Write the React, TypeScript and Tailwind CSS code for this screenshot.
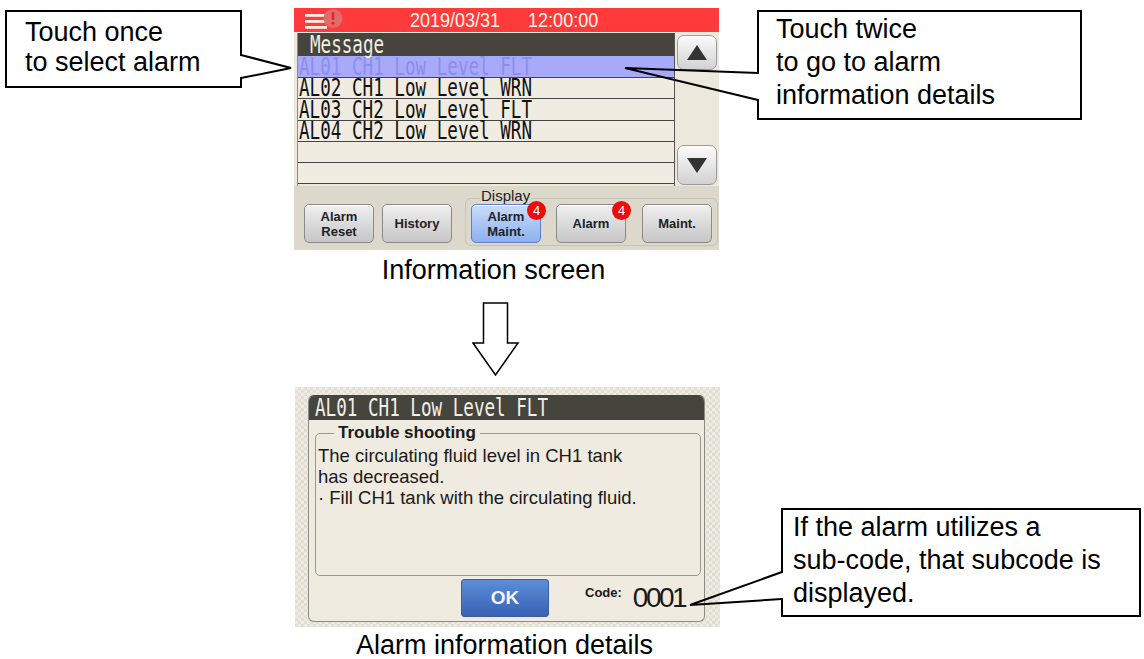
import clsx from "clsx";
import type { ReactNode } from "react";

const sans = "font-['Liberation_Sans',Arial,sans-serif]";

const alarms = [
    { text: "AL01 CH1 Low Level FLT", tall: true, selected: true },
    { text: "AL02 CH1 Low Level WRN", tall: false },
    { text: "AL03 CH2 Low Level FLT", tall: true },
    { text: "AL04 CH2 Low Level WRN", tall: false },
    { text: "", tall: false },
    { text: "", tall: false },
];

// narrow, tall panel font of the HMI
function HmiText({ children, className }: { children: ReactNode; className?: string }) {
    return (
        <span
            className={clsx(
                "inline-block origin-center scale-y-[1.4] whitespace-pre font-['DejaVu_Sans_Mono',monospace] text-[17.6px] leading-[14px]",
                className
            )}
        >
            {children}
        </span>
    );
}

function MenuAlertIcon() {
    return (
        <svg width="40" height="24" viewBox="0 0 40 24" className="ml-[10px] shrink-0">
            <rect x="1" y="6" width="22" height="2.8" fill="#f7efe6" />
            <rect x="1" y="12" width="22" height="2.8" fill="#f7efe6" />
            <rect x="1" y="18" width="22" height="2.8" fill="#f7efe6" />
            <circle cx="29" cy="10.5" r="9.5" fill="#e46a6a" />
            <rect x="27.7" y="4" width="2.6" height="8" rx="1" fill="#e0262b" />
            <circle cx="29" cy="15.3" r="1.5" fill="#e0262b" />
        </svg>
    );
}

function ScrollButton({ dir, className }: { dir: "up" | "down"; className?: string }) {
    return (
        <button
            className={clsx(
                "flex w-[40px] items-center justify-center rounded-[7px] border border-[#9a9a9a] bg-linear-to-b from-[#fbfbfb] to-[#d2d2d2] shadow-[inset_0_1px_0_#fff]",
                className
            )}
        >
            <svg width="20" height="15" viewBox="0 0 20 15">
                {dir === "up" ? (
                    <path d="M10 0 L20 15 H0 Z" fill="#333" />
                ) : (
                    <path d="M0 0 H20 L10 15 Z" fill="#333" />
                )}
            </svg>
        </button>
    );
}

function PanelButton({
    children,
    badge,
    active,
    className,
}: {
    children: ReactNode;
    badge?: number;
    active?: boolean;
    className?: string;
}) {
    return (
        <button
            className={clsx(
                "relative flex h-[39px] w-[70px] shrink-0 items-center justify-center rounded-[5px] border text-center text-[13px] font-bold leading-[15px] text-[#222] shadow-[inset_0_1px_0_#fff]",
                sans,
                active
                    ? "border-[#5f80c8] bg-linear-to-b from-[#cadcfb] to-[#8db0ee]"
                    : "border-[#8a8a8a] bg-linear-to-b from-[#f0f0f0] to-[#c6c6c6]",
                className
            )}
        >
            {children}
            {badge !== undefined && (
                <span className="absolute -right-[6px] -top-[4px] flex size-[19px] items-center justify-center rounded-full bg-[#ee0b0b] text-[13px] font-normal leading-none text-white">
                    {badge}
                </span>
            )}
        </button>
    );
}

function InformationScreen() {
    return (
        <div className="flex h-[242px] w-[425px] flex-col bg-[#ece8dc]">
            {/* Status bar */}
            <div className={clsx("flex h-[24px] items-center bg-[#ff3a3a] text-[18px] text-[#fff4e8]", sans)}>
                <MenuAlertIcon />
                <span className="ml-[66px] inline-block scale-y-[1.1] leading-none">2019/03/31</span>
                <span className="ml-[28px] inline-block scale-y-[1.1] leading-none">12:00:00</span>
            </div>

            {/* Message list */}
            <div className="flex h-[154px]">
                <div className="ml-[3px] mt-px flex w-[378px] flex-col border-l border-r border-l-[#8a8a8a] border-r-[#555]">
                    <div className="flex h-[23px] items-center bg-[#46453d] pl-[12px] text-[#f2f0e6]">
                        <HmiText>Message</HmiText>
                    </div>
                    {alarms.map((row, i) => (
                        <div
                            key={i}
                            className={clsx(
                                "flex items-center border-b border-[#444] pl-px",
                                row.tall ? "h-[22px]" : "h-[21px]",
                                row.selected ? "bg-[#a9a9fa] text-[#8d8df0]" : "bg-[#f0ece1] text-[#111]"
                            )}
                        >
                            <HmiText>{row.text}</HmiText>
                        </div>
                    ))}
                </div>
                <div className="flex w-[44px] flex-col justify-between pb-px pl-[2px] pt-[3px]">
                    <ScrollButton dir="up" className="h-[35px]" />
                    <ScrollButton dir="down" className="h-[40px]" />
                </div>
            </div>

            {/* Bottom buttons */}
            <div className="flex h-[64px] items-start bg-[#dcd8cc] pl-[10px]">
                <PanelButton className="mt-[18px]">
                    Alarm
                    <br />
                    Reset
                </PanelButton>
                <PanelButton className="ml-[8px] mt-[18px]">History</PanelButton>
                <div className="relative ml-[13px] mt-[12px] flex h-[48px] items-start gap-[15px] rounded-[6px] border border-[#c6c2b4] pl-[5px] pr-[5px] pt-[5px]">
                    <span
                        className={clsx(
                            "absolute -top-[11px] left-[14px] bg-[#dcd8cc] px-px text-[15px] leading-[16px] text-[#222]",
                            sans
                        )}
                    >
                        Display
                    </span>
                    <PanelButton active badge={4}>
                        Alarm
                        <br />
                        Maint.
                    </PanelButton>
                    <PanelButton badge={4}>Alarm</PanelButton>
                    <PanelButton className="ml-px">Maint.</PanelButton>
                </div>
            </div>
        </div>
    );
}

function AlarmDetailScreen() {
    return (
        <div className="ml-px mt-[9px] h-[240px] w-[425px] bg-[#ebe7dc] bg-[image:repeating-conic-gradient(#e2ded2_0_25%,#eeebe3_0_50%)] bg-[length:6px_6px] pl-[13px] pt-[8px]">
            <div className="flex h-[227px] w-[397px] flex-col overflow-hidden rounded-[6px] border border-[#8d8c84] border-t-[#46453d] bg-[#efebe0]">
                <div className="flex h-[24px] items-center bg-[#46453d] pl-[6px] text-[#f2f0e8]">
                    <HmiText>AL01 CH1 Low Level FLT</HmiText>
                </div>

                <fieldset className={clsx("ml-[6px] mt-[4px] h-[152px] w-[386px] rounded-[5px] border border-[#9a988e] pl-[2px]", sans)}>
                    <legend className="ml-[16px] px-[4px] text-[17px] font-bold leading-[18px] text-[#1a1a1a]">
                        Trouble shooting
                    </legend>
                    <div className="mt-[3px] text-[18.5px] leading-[21px] text-[#1a1a1a]">
                        <div>The circulating fluid level in CH1 tank</div>
                        <div>has decreased.</div>
                        <div>· Fill CH1 tank with the circulating fluid.</div>
                    </div>
                </fieldset>

                <div className={clsx("mt-[3px] flex items-start", sans)}>
                    <button className="ml-[152px] flex h-[38px] w-[88px] items-center justify-center rounded-[3px] border border-[#3a5ea8] bg-linear-to-b from-[#5d8dd9] to-[#3a61b5] text-[19px] font-bold text-[#f4f4f4]">
                        OK
                    </button>
                    <span className="ml-[36px] mt-[6px] text-[13px] font-bold leading-[15px] text-[#1a1a1a]">Code:</span>
                    <span className="ml-[11px] mt-[5px] text-[28px] leading-none tracking-[-2.5px] text-[#1a1a1a]">0001</span>
                </div>
            </div>
        </div>
    );
}

function DownArrow() {
    return (
        <svg width="48" height="76" viewBox="0 0 48 76" className="ml-[178px] mt-[17px]">
            <path
                d="M11.5 1 H35.5 V41 H46 L23.5 73 L1 41 H11.5 Z"
                fill="#fff"
                stroke="#000"
                strokeWidth="1.5"
                strokeLinejoin="miter"
            />
        </svg>
    );
}

function Callout({ className, children }: { className: string; children: ReactNode }) {
    return (
        <div className={clsx("absolute border-2 border-black bg-white text-[27px] text-black", sans, className)}>
            {children}
        </div>
    );
}

export default function App() {
    return (
        <div className="relative h-[659px] w-[1144px] overflow-hidden bg-white">
            <div className="flex flex-col pl-[294px] pt-[8px]">
                <InformationScreen />
                <div className={clsx("mt-[5px] w-[425px] pr-[26px] text-center text-[27px] leading-[30px] text-black", sans)}>
                    Information screen
                </div>
                <DownArrow />
                <AlarmDetailScreen />
                <div className={clsx("mt-[3px] w-[425px] pr-[4px] text-center text-[27px] leading-[30px] text-black", sans)}>
                    Alarm information details
                </div>
            </div>

            {/* Callouts */}
            <Callout className="left-[5px] top-[10px] h-[78px] w-[237px] pl-[18px] pt-[5px] leading-[30px]">
                <div>Touch once</div>
                <div>to select alarm</div>
            </Callout>
            <Callout className="left-[757px] top-[10px] h-[110px] w-[325px] pl-[17px] pt-[1px] leading-[33px]">
                <div>Touch twice</div>
                <div>to go to alarm</div>
                <div>information details</div>
            </Callout>
            <Callout className="left-[781px] top-[508px] h-[109px] w-[360px] pl-[10px] pt-[1px] leading-[33px]">
                <div>If the alarm utilizes a</div>
                <div>sub-code, that subcode is</div>
                <div>displayed.</div>
            </Callout>

            {/* Callout pointers */}
            <svg width="1144" height="659" className="pointer-events-none absolute left-0 top-0">
                <rect x="239" y="56" width="4" height="21" fill="#fff" />
                <polyline points="241,55 291,68 241,78" fill="none" stroke="#000" strokeWidth="2" />
                <rect x="756" y="74" width="4" height="25" fill="#fff" />
                <polyline points="758,73 625,68 758,100" fill="none" stroke="#000" strokeWidth="2" />
                <rect x="780" y="573" width="4" height="25" fill="#fff" />
                <polyline points="782,572 690,605 782,599" fill="none" stroke="#000" strokeWidth="2" />
            </svg>
        </div>
    );
}
